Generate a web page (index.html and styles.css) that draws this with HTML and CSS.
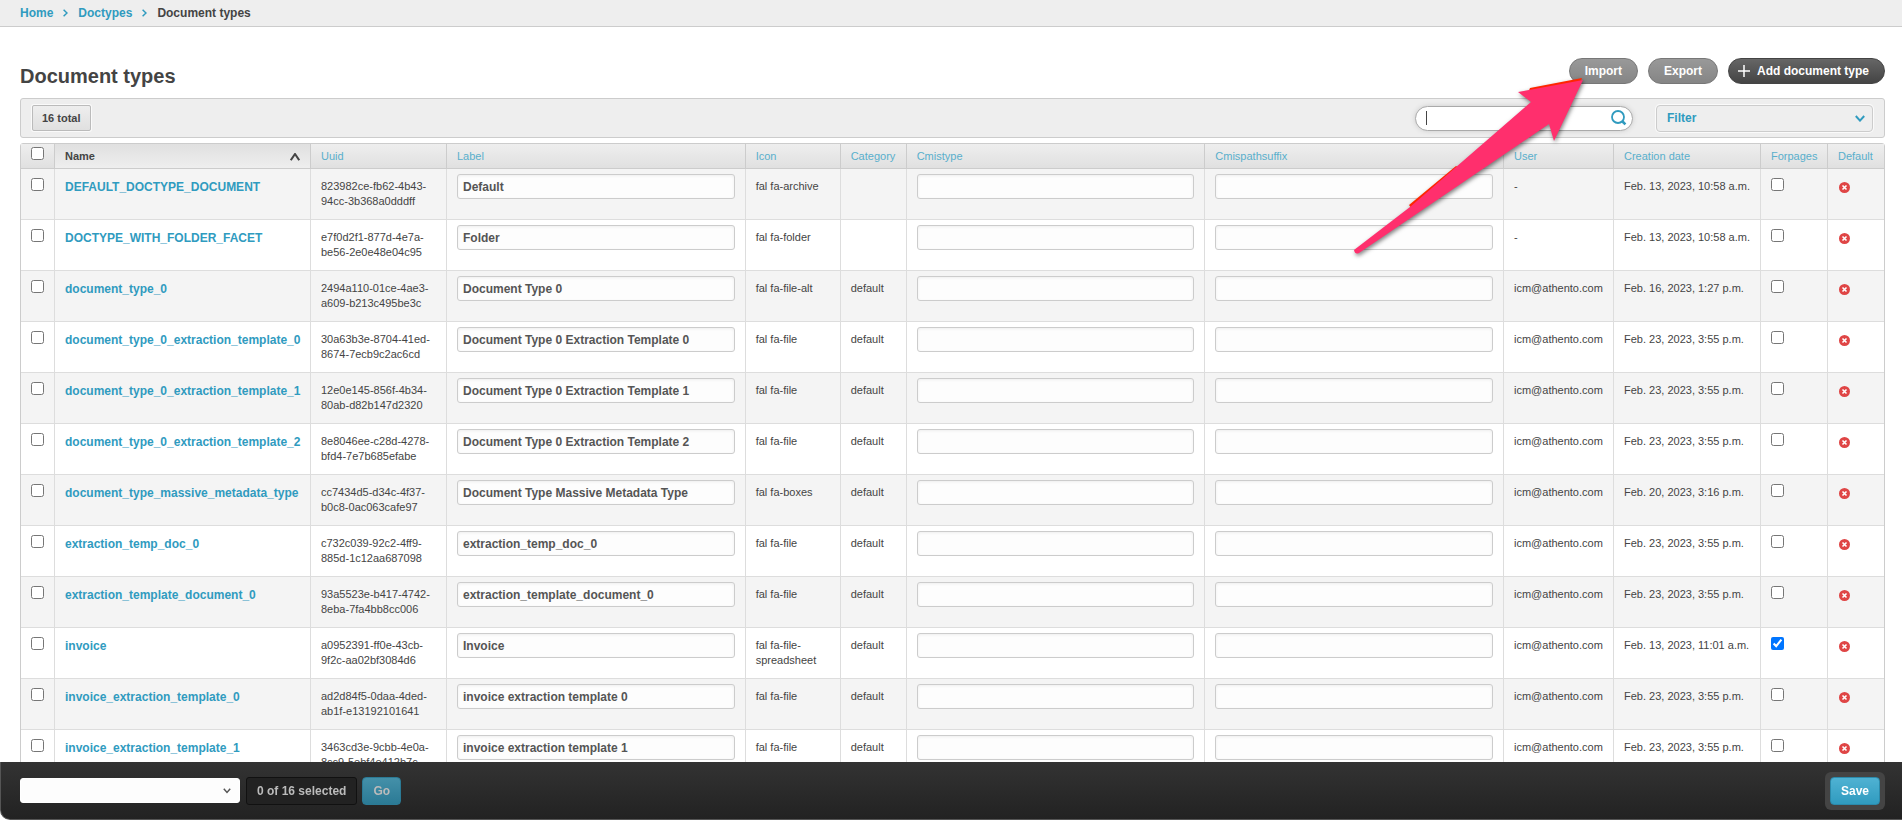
FILE: index.html
```
<!DOCTYPE html>
<html lang="en">
<head>
    <meta charset="UTF-8">
    <meta name="viewport" content="width=device-width, initial-scale=1.0">
    <title>Document types</title>
    <link rel="stylesheet" href="styles.css">
</head>
<body>
    <nav class="breadcrumbs">
        <a href="#">Home</a>
        <svg class="sep" viewBox="0 0 5 8"><path d="M0.6 0.7 4 4 0.6 7.3"/></svg>
        <a href="#">Doctypes</a>
        <svg class="sep" viewBox="0 0 5 8"><path d="M0.6 0.7 4 4 0.6 7.3"/></svg>
        <span>Document types</span>
    </nav>

    <main class="content">
        <header class="page-header">
            <h1>Document types</h1>
            <div class="tools">
                <button type="button" class="tool">Import</button>
                <button type="button" class="tool">Export</button>
                <button type="button" class="tool tool-add">
                    <svg viewBox="0 0 12 12"><path d="M6 0V12M0 6H12"/></svg>Add document type
                </button>
            </div>
            <svg class="arrow" viewBox="0 0 240 184">
                <path class="arrow-edge" d="M180 17 232 7 230 12 178 22ZM59 134 106 95 110 97 62 138Z"/>
                <path d="M233 9 204 70 199 53 9 182Q5 184 4 179L60 136 181 31 168 21Z"/>
            </svg>
        </header>

        <div class="toolbar">
            <button type="button" class="total">16 total</button>
            <div class="search">
                <span class="caret"></span>
                <input type="text" aria-label="Search">
                <button type="button" aria-label="Search">
                    <svg viewBox="0 0 16 16"><circle cx="7" cy="7" r="6"/><path d="M11 11 14.4 14.4"/></svg>
                </button>
            </div>
            <button type="button" class="filter">Filter
                <svg viewBox="0 0 10 7"><path d="M0.8 1 5 5.6 9.2 1"/></svg>
            </button>
        </div>

        <table>
            <colgroup>
                <col class="col-check">
                <col class="col-name">
                <col class="col-uuid">
                <col>
                <col class="col-icon">
                <col class="col-category">
                <col>
                <col>
                <col class="col-user">
                <col class="col-date">
                <col class="col-forpages">
                <col class="col-default">
            </colgroup>
            <thead>
                <tr>
                    <th><input type="checkbox" aria-label="Select all"></th>
                    <th class="sorted"><a href="#">Name</a><svg viewBox="0 0 10 8"><path d="M0.8 7.2 5 1 9.2 7.2"/></svg></th>
                    <th><a href="#">Uuid</a></th>
                    <th><a href="#">Label</a></th>
                    <th><a href="#">Icon</a></th>
                    <th><a href="#">Category</a></th>
                    <th><a href="#">Cmistype</a></th>
                    <th><a href="#">Cmispathsuffix</a></th>
                    <th><a href="#">User</a></th>
                    <th><a href="#">Creation date</a></th>
                    <th><a href="#">Forpages</a></th>
                    <th><a href="#">Default</a></th>
                </tr>
            </thead>
            <tbody>
                <tr>
                    <td class="check"><input type="checkbox" aria-label="Select row"></td>
                    <td><a href="#">DEFAULT_DOCTYPE_DOCUMENT</a></td>
                    <td>823982ce-fb62-4b43-94cc-3b368a0dddff</td>
                    <td class="field"><input type="text" aria-label="Label" value="Default"></td>
                    <td>fal fa-archive</td>
                    <td></td>
                    <td class="field"><input type="text" aria-label="Cmistype"></td>
                    <td class="field"><input type="text" aria-label="Cmispathsuffix"></td>
                    <td>-</td>
                    <td>Feb. 13, 2023, 10:58 a.m.</td>
                    <td class="check"><input type="checkbox" aria-label="Forpages"></td>
                    <td><svg class="no" viewBox="0 0 11 11"><circle cx="5.5" cy="5.5" r="5.5"/><path d="M3.5 3.5 7.5 7.5M7.5 3.5 3.5 7.5"/></svg></td>
                </tr>
                <tr>
                    <td class="check"><input type="checkbox" aria-label="Select row"></td>
                    <td><a href="#">DOCTYPE_WITH_FOLDER_FACET</a></td>
                    <td>e7f0d2f1-877d-4e7a-be56-2e0e48e04c95</td>
                    <td class="field"><input type="text" aria-label="Label" value="Folder"></td>
                    <td>fal fa-folder</td>
                    <td></td>
                    <td class="field"><input type="text" aria-label="Cmistype"></td>
                    <td class="field"><input type="text" aria-label="Cmispathsuffix"></td>
                    <td>-</td>
                    <td>Feb. 13, 2023, 10:58 a.m.</td>
                    <td class="check"><input type="checkbox" aria-label="Forpages"></td>
                    <td><svg class="no" viewBox="0 0 11 11"><circle cx="5.5" cy="5.5" r="5.5"/><path d="M3.5 3.5 7.5 7.5M7.5 3.5 3.5 7.5"/></svg></td>
                </tr>
                <tr>
                    <td class="check"><input type="checkbox" aria-label="Select row"></td>
                    <td><a href="#">document_type_0</a></td>
                    <td>2494a110-01ce-4ae3-a609-b213c495be3c</td>
                    <td class="field"><input type="text" aria-label="Label" value="Document Type 0"></td>
                    <td>fal fa-file-alt</td>
                    <td>default</td>
                    <td class="field"><input type="text" aria-label="Cmistype"></td>
                    <td class="field"><input type="text" aria-label="Cmispathsuffix"></td>
                    <td>icm@athento.com</td>
                    <td>Feb. 16, 2023, 1:27 p.m.</td>
                    <td class="check"><input type="checkbox" aria-label="Forpages"></td>
                    <td><svg class="no" viewBox="0 0 11 11"><circle cx="5.5" cy="5.5" r="5.5"/><path d="M3.5 3.5 7.5 7.5M7.5 3.5 3.5 7.5"/></svg></td>
                </tr>
                <tr>
                    <td class="check"><input type="checkbox" aria-label="Select row"></td>
                    <td><a href="#">document_type_0_extraction_template_0</a></td>
                    <td>30a63b3e-8704-41ed-8674-7ecb9c2ac6cd</td>
                    <td class="field"><input type="text" aria-label="Label" value="Document Type 0 Extraction Template 0"></td>
                    <td>fal fa-file</td>
                    <td>default</td>
                    <td class="field"><input type="text" aria-label="Cmistype"></td>
                    <td class="field"><input type="text" aria-label="Cmispathsuffix"></td>
                    <td>icm@athento.com</td>
                    <td>Feb. 23, 2023, 3:55 p.m.</td>
                    <td class="check"><input type="checkbox" aria-label="Forpages"></td>
                    <td><svg class="no" viewBox="0 0 11 11"><circle cx="5.5" cy="5.5" r="5.5"/><path d="M3.5 3.5 7.5 7.5M7.5 3.5 3.5 7.5"/></svg></td>
                </tr>
                <tr>
                    <td class="check"><input type="checkbox" aria-label="Select row"></td>
                    <td><a href="#">document_type_0_extraction_template_1</a></td>
                    <td>12e0e145-856f-4b34-80ab-d82b147d2320</td>
                    <td class="field"><input type="text" aria-label="Label" value="Document Type 0 Extraction Template 1"></td>
                    <td>fal fa-file</td>
                    <td>default</td>
                    <td class="field"><input type="text" aria-label="Cmistype"></td>
                    <td class="field"><input type="text" aria-label="Cmispathsuffix"></td>
                    <td>icm@athento.com</td>
                    <td>Feb. 23, 2023, 3:55 p.m.</td>
                    <td class="check"><input type="checkbox" aria-label="Forpages"></td>
                    <td><svg class="no" viewBox="0 0 11 11"><circle cx="5.5" cy="5.5" r="5.5"/><path d="M3.5 3.5 7.5 7.5M7.5 3.5 3.5 7.5"/></svg></td>
                </tr>
                <tr>
                    <td class="check"><input type="checkbox" aria-label="Select row"></td>
                    <td><a href="#">document_type_0_extraction_template_2</a></td>
                    <td>8e8046ee-c28d-4278-bfd4-7e7b685efabe</td>
                    <td class="field"><input type="text" aria-label="Label" value="Document Type 0 Extraction Template 2"></td>
                    <td>fal fa-file</td>
                    <td>default</td>
                    <td class="field"><input type="text" aria-label="Cmistype"></td>
                    <td class="field"><input type="text" aria-label="Cmispathsuffix"></td>
                    <td>icm@athento.com</td>
                    <td>Feb. 23, 2023, 3:55 p.m.</td>
                    <td class="check"><input type="checkbox" aria-label="Forpages"></td>
                    <td><svg class="no" viewBox="0 0 11 11"><circle cx="5.5" cy="5.5" r="5.5"/><path d="M3.5 3.5 7.5 7.5M7.5 3.5 3.5 7.5"/></svg></td>
                </tr>
                <tr>
                    <td class="check"><input type="checkbox" aria-label="Select row"></td>
                    <td><a href="#">document_type_massive_metadata_type</a></td>
                    <td>cc7434d5-d34c-4f37-b0c8-0ac063cafe97</td>
                    <td class="field"><input type="text" aria-label="Label" value="Document Type Massive Metadata Type"></td>
                    <td>fal fa-boxes</td>
                    <td>default</td>
                    <td class="field"><input type="text" aria-label="Cmistype"></td>
                    <td class="field"><input type="text" aria-label="Cmispathsuffix"></td>
                    <td>icm@athento.com</td>
                    <td>Feb. 20, 2023, 3:16 p.m.</td>
                    <td class="check"><input type="checkbox" aria-label="Forpages"></td>
                    <td><svg class="no" viewBox="0 0 11 11"><circle cx="5.5" cy="5.5" r="5.5"/><path d="M3.5 3.5 7.5 7.5M7.5 3.5 3.5 7.5"/></svg></td>
                </tr>
                <tr>
                    <td class="check"><input type="checkbox" aria-label="Select row"></td>
                    <td><a href="#">extraction_temp_doc_0</a></td>
                    <td>c732c039-92c2-4ff9-885d-1c12aa687098</td>
                    <td class="field"><input type="text" aria-label="Label" value="extraction_temp_doc_0"></td>
                    <td>fal fa-file</td>
                    <td>default</td>
                    <td class="field"><input type="text" aria-label="Cmistype"></td>
                    <td class="field"><input type="text" aria-label="Cmispathsuffix"></td>
                    <td>icm@athento.com</td>
                    <td>Feb. 23, 2023, 3:55 p.m.</td>
                    <td class="check"><input type="checkbox" aria-label="Forpages"></td>
                    <td><svg class="no" viewBox="0 0 11 11"><circle cx="5.5" cy="5.5" r="5.5"/><path d="M3.5 3.5 7.5 7.5M7.5 3.5 3.5 7.5"/></svg></td>
                </tr>
                <tr>
                    <td class="check"><input type="checkbox" aria-label="Select row"></td>
                    <td><a href="#">extraction_template_document_0</a></td>
                    <td>93a5523e-b417-4742-8eba-7fa4bb8cc006</td>
                    <td class="field"><input type="text" aria-label="Label" value="extraction_template_document_0"></td>
                    <td>fal fa-file</td>
                    <td>default</td>
                    <td class="field"><input type="text" aria-label="Cmistype"></td>
                    <td class="field"><input type="text" aria-label="Cmispathsuffix"></td>
                    <td>icm@athento.com</td>
                    <td>Feb. 23, 2023, 3:55 p.m.</td>
                    <td class="check"><input type="checkbox" aria-label="Forpages"></td>
                    <td><svg class="no" viewBox="0 0 11 11"><circle cx="5.5" cy="5.5" r="5.5"/><path d="M3.5 3.5 7.5 7.5M7.5 3.5 3.5 7.5"/></svg></td>
                </tr>
                <tr>
                    <td class="check"><input type="checkbox" aria-label="Select row"></td>
                    <td><a href="#">invoice</a></td>
                    <td>a0952391-ff0e-43cb-9f2c-aa02bf3084d6</td>
                    <td class="field"><input type="text" aria-label="Label" value="Invoice"></td>
                    <td>fal fa-file-spreadsheet</td>
                    <td>default</td>
                    <td class="field"><input type="text" aria-label="Cmistype"></td>
                    <td class="field"><input type="text" aria-label="Cmispathsuffix"></td>
                    <td>icm@athento.com</td>
                    <td>Feb. 13, 2023, 11:01 a.m.</td>
                    <td class="check"><input type="checkbox" aria-label="Forpages" checked></td>
                    <td><svg class="no" viewBox="0 0 11 11"><circle cx="5.5" cy="5.5" r="5.5"/><path d="M3.5 3.5 7.5 7.5M7.5 3.5 3.5 7.5"/></svg></td>
                </tr>
                <tr>
                    <td class="check"><input type="checkbox" aria-label="Select row"></td>
                    <td><a href="#">invoice_extraction_template_0</a></td>
                    <td>ad2d84f5-0daa-4ded-ab1f-e13192101641</td>
                    <td class="field"><input type="text" aria-label="Label" value="invoice extraction template 0"></td>
                    <td>fal fa-file</td>
                    <td>default</td>
                    <td class="field"><input type="text" aria-label="Cmistype"></td>
                    <td class="field"><input type="text" aria-label="Cmispathsuffix"></td>
                    <td>icm@athento.com</td>
                    <td>Feb. 23, 2023, 3:55 p.m.</td>
                    <td class="check"><input type="checkbox" aria-label="Forpages"></td>
                    <td><svg class="no" viewBox="0 0 11 11"><circle cx="5.5" cy="5.5" r="5.5"/><path d="M3.5 3.5 7.5 7.5M7.5 3.5 3.5 7.5"/></svg></td>
                </tr>
                <tr>
                    <td class="check"><input type="checkbox" aria-label="Select row"></td>
                    <td><a href="#">invoice_extraction_template_1</a></td>
                    <td>3463cd3e-9cbb-4e0a-8cc9-5ebf4e412b7c</td>
                    <td class="field"><input type="text" aria-label="Label" value="invoice extraction template 1"></td>
                    <td>fal fa-file</td>
                    <td>default</td>
                    <td class="field"><input type="text" aria-label="Cmistype"></td>
                    <td class="field"><input type="text" aria-label="Cmispathsuffix"></td>
                    <td>icm@athento.com</td>
                    <td>Feb. 23, 2023, 3:55 p.m.</td>
                    <td class="check"><input type="checkbox" aria-label="Forpages"></td>
                    <td><svg class="no" viewBox="0 0 11 11"><circle cx="5.5" cy="5.5" r="5.5"/><path d="M3.5 3.5 7.5 7.5M7.5 3.5 3.5 7.5"/></svg></td>
                </tr>
            </tbody>
        </table>
    </main>

    <footer class="actions">
        <div class="select-wrap">
            <select aria-label="Action"><option></option></select>
            <svg viewBox="0 0 8 6"><path d="M0.8 0.8 4 4.4 7.2 0.8"/></svg>
        </div>
        <span class="counter">0 of 16 selected</span>
        <button type="button" class="btn btn-go">Go</button>
        <div class="save-box">
            <button type="button" class="btn">Save</button>
        </div>
    </footer>
</body>
</html>
```
FILE: styles.css
```
* {
    box-sizing: border-box;
}

html {
    scrollbar-width: none;
}

body {
    margin: 0;
    padding-bottom: 58px;
    font-family: "Liberation Sans", Arial, sans-serif;
    font-size: 11px;
    line-height: 15px;
    color: #444;
    background: #fff;
}

a {
    color: #309bbf;
    text-decoration: none;
}

button, input, select {
    margin: 0;
    font-family: inherit;
    font-size: 12px;
    font-weight: bold;
}

svg {
    fill: none;
    stroke: #309bbf;
    stroke-width: 2;
}

.breadcrumbs {
    display: flex;
    align-items: center;
    gap: 10px;
    height: 27px;
    padding: 0 20px;
    font-size: 12px;
    font-weight: bold;
    background: #eee;
    border-bottom: 1px solid #ccc;
}

.breadcrumbs .sep {
    width: 5px;
    height: 8px;
    stroke-width: 1.5;
}

.content {
    padding: 31px 17px 0 20px;
}

.page-header {
    display: flex;
    justify-content: space-between;
    align-items: flex-start;
    height: 40px;
    position: relative;
}

h1 {
    margin: 6px 0 0;
    font-size: 20px;
    line-height: 24px;
}

.tools {
    display: flex;
    gap: 10px;
}

.tool {
    height: 26px;
    padding: 0 15px;
    color: #fff;
    background: linear-gradient(#999, #858585);
    border: 1px solid #777;
    border-radius: 13px;
}

.tool-add {
    display: flex;
    align-items: center;
    gap: 7px;
    padding-left: 9px;
    background: linear-gradient(#666, #444);
    border-color: #444;
}

.tool-add svg {
    width: 12px;
    height: 12px;
    stroke: #fff;
    stroke-width: 1.5;
}

/* pointer drawn over the page */
.arrow {
    position: absolute;
    top: 13px;
    right: 295px;
    z-index: 2;
    width: 240px;
    height: 184px;
    fill: #ff2f6d;
    stroke: none;
    filter: drop-shadow(1px 2px 2px rgba(0, 0, 0, 0.5));
    pointer-events: none;
}

.arrow-edge {
    fill: #ff2600;
}

.toolbar {
    display: flex;
    align-items: center;
    height: 40px;
    margin-bottom: 5px;
    padding: 0 11px;
    background: #eee;
    border: 1px solid #ccc;
    border-radius: 3px;
}

.total {
    height: 26px;
    padding: 0 9px;
    font-size: 11px;
    color: #444;
    background: linear-gradient(#eee, #e0e0e0);
    border: 1px solid #bbb;
    border-radius: 2px;
    box-shadow: 0 0 0 1px #fafafa;
}

.search {
    display: flex;
    align-items: center;
    width: 218px;
    height: 25px;
    margin: 0 23px 0 auto;
    padding: 0 5px 0 10px;
    background: #fff;
    border: 1px solid #aaa;
    border-radius: 13px;
    box-shadow: 0 0 5px #ccc;
}

.caret {
    width: 1px;
    height: 14px;
    background: #444;
}

.search input {
    flex: 1;
    min-width: 0;
    background: none;
    border: 0;
    outline: 0;
}

.search button {
    display: flex;
    padding: 0;
    background: none;
    border: 0;
}

.search svg {
    width: 16px;
    height: 16px;
}

.search circle {
    stroke-width: 1.8;
}

.search path {
    stroke-width: 2.6;
}

.filter {
    display: flex;
    justify-content: space-between;
    align-items: center;
    width: 217px;
    height: 27px;
    padding: 0 7px 0 10px;
    color: #309bbf;
    background: #eee;
    border: 1px solid #ccc;
    border-radius: 4px;
    box-shadow: 0 0 0 1px #fafafa;
}

.filter svg {
    width: 10px;
    height: 7px;
}

table {
    width: 100%;
    table-layout: fixed;
    border: 1px solid #ccc;
    border-radius: 3px;
    border-spacing: 0;
}

.col-check { width: 34px; }
.col-name { width: 256px; }
.col-uuid { width: 136px; }
.col-icon { width: 95px; }
.col-category { width: 66px; }
.col-user { width: 110px; }
.col-date { width: 147px; }
.col-forpages { width: 67px; }
.col-default { width: 56px; }

th {
    height: 25px;
    padding: 0 10px;
    font-weight: normal;
    text-align: left;
    background: linear-gradient(#eee, #e0e0e0);
    border-right: 1px solid #ccc;
    border-bottom: 1px solid #ccc;
}

th a {
    color: #59afcc;
}

.sorted {
    font-weight: bold;
    background: linear-gradient(#e0e0e0, #eee);
}

.sorted a {
    color: #444;
}

.sorted svg {
    float: right;
    width: 10px;
    height: 8px;
    margin-top: 4px;
    stroke: #444;
}

td {
    height: 51px;
    padding: 10px 10px 0;
    vertical-align: top;
    border-right: 1px solid #ddd;
    border-bottom: 1px solid #ddd;
}

th:last-child,
td:last-child {
    border-right: 0;
}

tbody tr:nth-child(odd) {
    background: #f4f4f4;
}

td a {
    display: block;
    font-size: 12px;
    line-height: 17px;
    font-weight: bold;
}

.field {
    padding-top: 5px;
}

.check {
    padding-top: 9px;
}

input[type="checkbox"] {
    display: block;
    width: 13px;
    height: 13px;
}

th input[type="checkbox"] {
    margin-bottom: 5px;
}

.field input {
    display: block;
    width: 100%;
    height: 25px;
    padding: 0 5px;
    color: #555;
    background: #fdfdfd;
    border: 1px solid #ccc;
    border-radius: 3px;
    box-shadow: inset 0 1px 3px #eee;
}

.no {
    display: block;
    width: 11px;
    height: 11px;
    margin: 3px 0 0 1px;
    stroke: #fff;
    stroke-width: 1.6;
}

.no circle {
    fill: #df4545;
    stroke: none;
}

.actions {
    position: fixed;
    right: 0;
    bottom: 0;
    left: 0;
    z-index: 3;
    display: flex;
    align-items: center;
    height: 58px;
    padding: 0 17px 0 19px;
    background: linear-gradient(#333, #222);
    border-bottom: 1px solid #555;
    border-left: 1px solid #555;
    border-radius: 0 0 0 10px;
}

.select-wrap {
    position: relative;
    width: 220px;
}

.select-wrap select {
    display: block;
    width: 100%;
    height: 25px;
    appearance: none;
    background: #fdfdfd;
    border: 1px solid #fff;
    border-radius: 3px;
}

.select-wrap svg {
    position: absolute;
    top: 10px;
    right: 9px;
    width: 8px;
    height: 6px;
    stroke: #555;
    stroke-width: 1.5;
    pointer-events: none;
}

.counter {
    height: 28px;
    margin: 0 5px 0 6px;
    padding: 0 10px;
    font-size: 12px;
    font-weight: bold;
    line-height: 26px;
    color: #bbb;
    background: #222;
    border: 1px solid #111;
    border-radius: 3px;
}

.btn {
    height: 28px;
    padding: 0 10px;
    color: #fff;
    background: linear-gradient(#4fb2d3, #309bbf);
    border: 1px solid #2b8aab;
    border-radius: 4px;
}

.btn-go {
    color: #bbb;
    background: linear-gradient(#4490a9, #2b7a95);
    border-color: #2b7a95;
}

.save-box {
    margin-left: auto;
    padding: 5px;
    background: #444;
    border-radius: 6px;
}
```
